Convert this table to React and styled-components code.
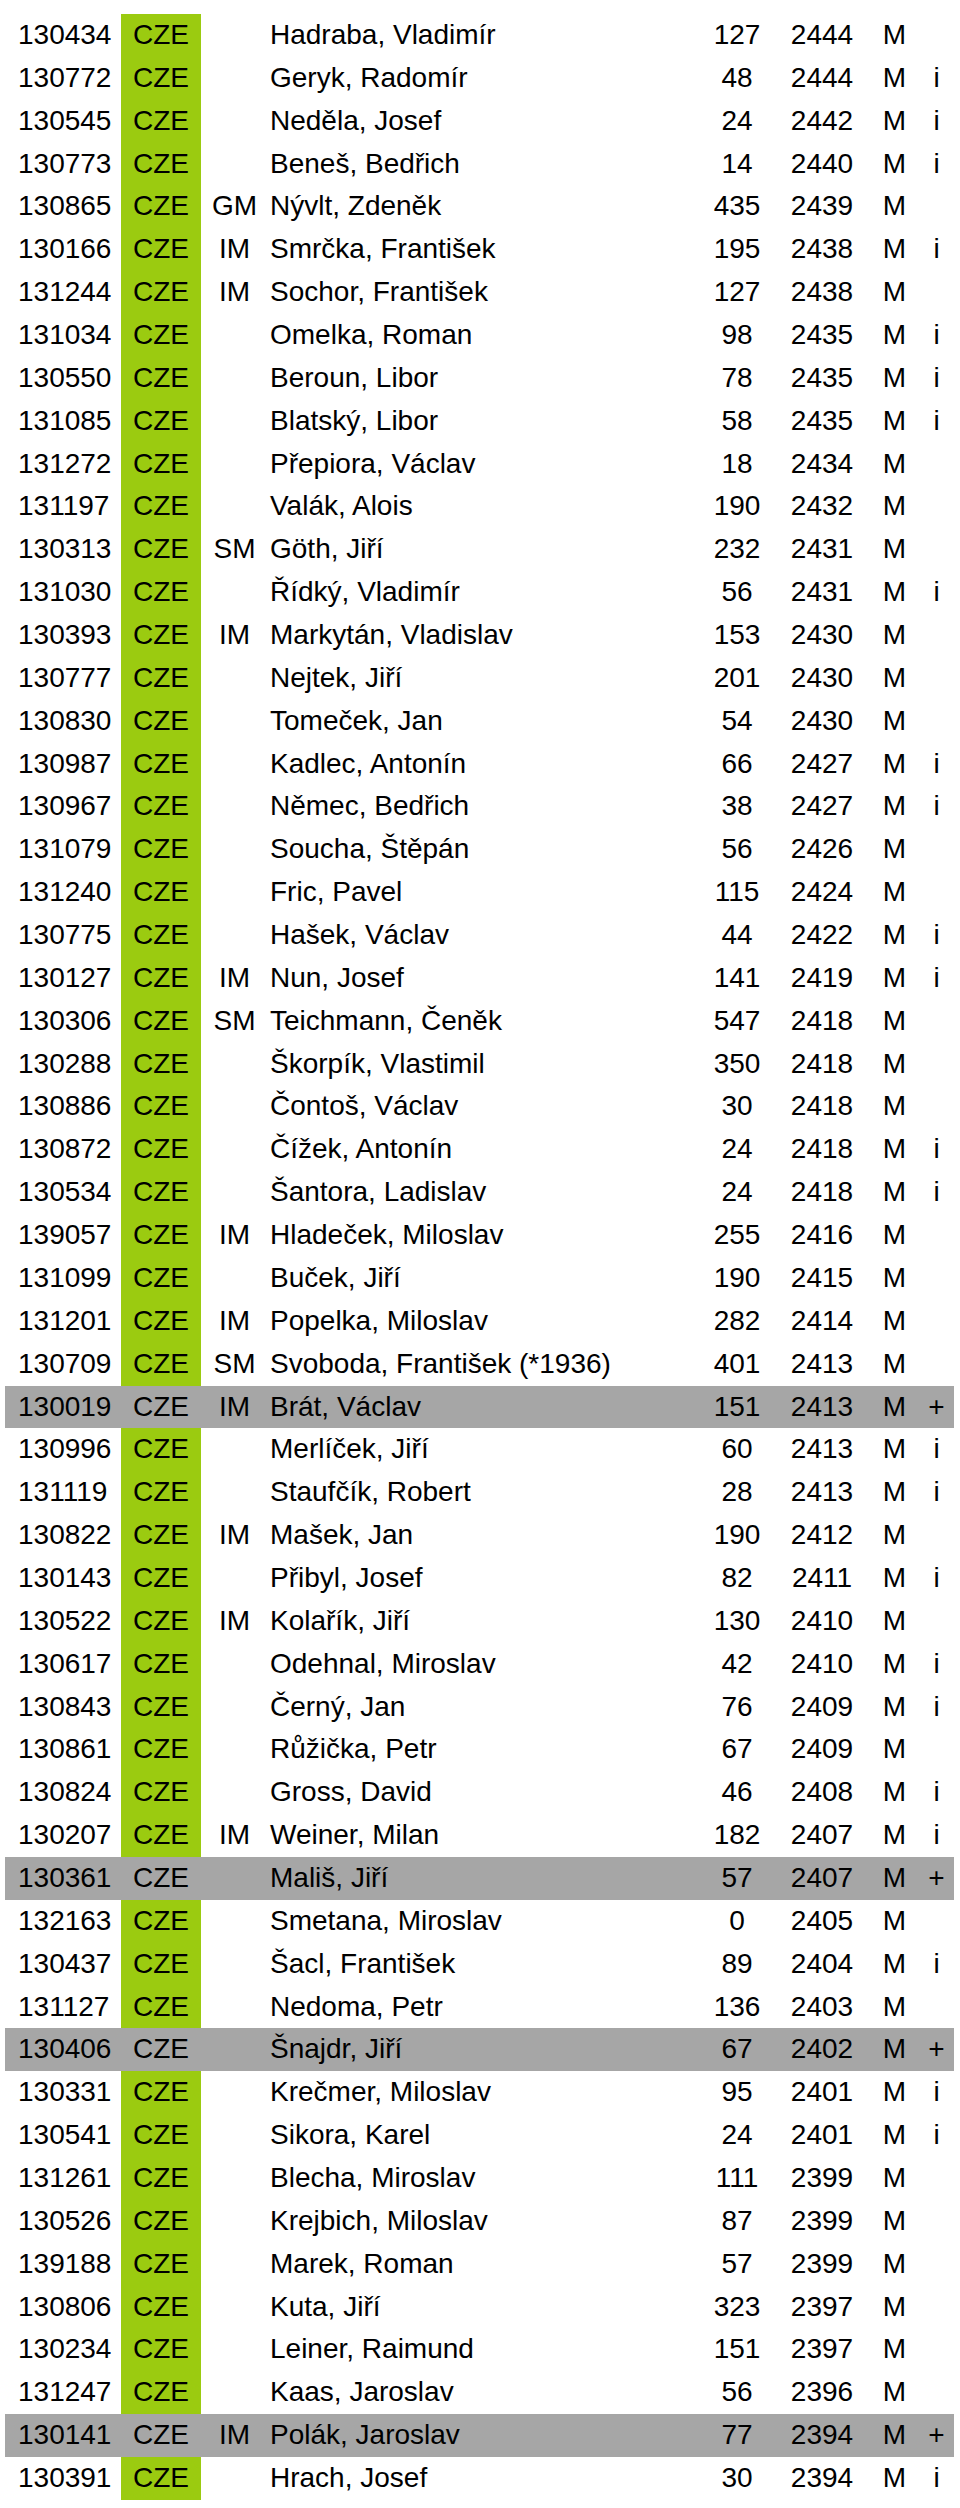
import React from "react";
import styled, { createGlobalStyle } from "styled-components";

const GlobalStyle = createGlobalStyle`
  html, body { margin: 0; padding: 0; background: #ffffff; }
  body { font-family: "Liberation Sans", Arial, sans-serif; color: #000; }
`;

const data = [
  ["130434", "", "Hadraba, Vladimír", "127", "2444", "M", ""],
  ["130772", "", "Geryk, Radomír", "48", "2444", "M", "i"],
  ["130545", "", "Neděla, Josef", "24", "2442", "M", "i"],
  ["130773", "", "Beneš, Bedřich", "14", "2440", "M", "i"],
  ["130865", "GM", "Nývlt, Zdeněk", "435", "2439", "M", ""],
  ["130166", "IM", "Smrčka, František", "195", "2438", "M", "i"],
  ["131244", "IM", "Sochor, František", "127", "2438", "M", ""],
  ["131034", "", "Omelka, Roman", "98", "2435", "M", "i"],
  ["130550", "", "Beroun, Libor", "78", "2435", "M", "i"],
  ["131085", "", "Blatský, Libor", "58", "2435", "M", "i"],
  ["131272", "", "Přepiora, Václav", "18", "2434", "M", ""],
  ["131197", "", "Valák, Alois", "190", "2432", "M", ""],
  ["130313", "SM", "Göth, Jiří", "232", "2431", "M", ""],
  ["131030", "", "Řídký, Vladimír", "56", "2431", "M", "i"],
  ["130393", "IM", "Markytán, Vladislav", "153", "2430", "M", ""],
  ["130777", "", "Nejtek, Jiří", "201", "2430", "M", ""],
  ["130830", "", "Tomeček, Jan", "54", "2430", "M", ""],
  ["130987", "", "Kadlec, Antonín", "66", "2427", "M", "i"],
  ["130967", "", "Němec, Bedřich", "38", "2427", "M", "i"],
  ["131079", "", "Soucha, Štěpán", "56", "2426", "M", ""],
  ["131240", "", "Fric, Pavel", "115", "2424", "M", ""],
  ["130775", "", "Hašek, Václav", "44", "2422", "M", "i"],
  ["130127", "IM", "Nun, Josef", "141", "2419", "M", "i"],
  ["130306", "SM", "Teichmann, Čeněk", "547", "2418", "M", ""],
  ["130288", "", "Škorpík, Vlastimil", "350", "2418", "M", ""],
  ["130886", "", "Čontoš, Václav", "30", "2418", "M", ""],
  ["130872", "", "Čížek, Antonín", "24", "2418", "M", "i"],
  ["130534", "", "Šantora, Ladislav", "24", "2418", "M", "i"],
  ["139057", "IM", "Hladeček, Miloslav", "255", "2416", "M", ""],
  ["131099", "", "Buček, Jiří", "190", "2415", "M", ""],
  ["131201", "IM", "Popelka, Miloslav", "282", "2414", "M", ""],
  ["130709", "SM", "Svoboda, František (*1936)", "401", "2413", "M", ""],
  ["130019", "IM", "Brát, Václav", "151", "2413", "M", "+"],
  ["130996", "", "Merlíček, Jiří", "60", "2413", "M", "i"],
  ["131119", "", "Staufčík, Robert", "28", "2413", "M", "i"],
  ["130822", "IM", "Mašek, Jan", "190", "2412", "M", ""],
  ["130143", "", "Přibyl, Josef", "82", "2411", "M", "i"],
  ["130522", "IM", "Kolařík, Jiří", "130", "2410", "M", ""],
  ["130617", "", "Odehnal, Miroslav", "42", "2410", "M", "i"],
  ["130843", "", "Černý, Jan", "76", "2409", "M", "i"],
  ["130861", "", "Růžička, Petr", "67", "2409", "M", ""],
  ["130824", "", "Gross, David", "46", "2408", "M", "i"],
  ["130207", "IM", "Weiner, Milan", "182", "2407", "M", "i"],
  ["130361", "", "Mališ, Jiří", "57", "2407", "M", "+"],
  ["132163", "", "Smetana, Miroslav", "0", "2405", "M", ""],
  ["130437", "", "Šacl, František", "89", "2404", "M", "i"],
  ["131127", "", "Nedoma, Petr", "136", "2403", "M", ""],
  ["130406", "", "Šnajdr, Jiří", "67", "2402", "M", "+"],
  ["130331", "", "Krečmer, Miloslav", "95", "2401", "M", "i"],
  ["130541", "", "Sikora, Karel", "24", "2401", "M", "i"],
  ["131261", "", "Blecha, Miroslav", "111", "2399", "M", ""],
  ["130526", "", "Krejbich, Miloslav", "87", "2399", "M", ""],
  ["139188", "", "Marek, Roman", "57", "2399", "M", ""],
  ["130806", "", "Kuta, Jiří", "323", "2397", "M", ""],
  ["130234", "", "Leiner, Raimund", "151", "2397", "M", ""],
  ["131247", "", "Kaas, Jaroslav", "56", "2396", "M", ""],
  ["130141", "IM", "Polák, Jaroslav", "77", "2394", "M", "+"],
  ["130391", "", "Hrach, Josef", "30", "2394", "M", "i"],
];

const Table = styled.div`
  display: flex;
  flex-direction: column;
  padding: 14px 6px 0 5px;
  width: 949px;
`;

const Row = styled.div`
  display: grid;
  grid-template-columns: 116px 80px 67px 432px 74px 96px 49px 35px;
  height: 42.86px;
  line-height: 42.86px;
  font-size: 28px;
  background: ${(p) => (p.$highlight ? "#a6a6a6" : "transparent")};
`;

const Cell = styled.div`
  white-space: nowrap;
  overflow: visible;
  text-align: ${(p) => p.$align || "left"};
  padding-left: ${(p) => p.$pl || 0}px;
`;

const Country = styled(Cell)`
  text-align: center;
  background: ${(p) => (p.$highlight ? "transparent" : "#9bcb10")};
`;

export default function App() {
  return (
    <>
      <GlobalStyle />
      <Table>
        {data.map(([id, title, name, games, rating, sex, flag]) => {
          const hl = flag === "+";
          return (
            <Row key={id} $highlight={hl}>
              <Cell $pl={13}>{id}</Cell>
              <Country $highlight={hl}>CZE</Country>
              <Cell $align="center">{title}</Cell>
              <Cell $pl={2}>{name}</Cell>
              <Cell $align="center">{games}</Cell>
              <Cell $align="center">{rating}</Cell>
              <Cell $align="center">{sex}</Cell>
              <Cell $align="center">{flag}</Cell>
            </Row>
          );
        })}
      </Table>
    </>
  );
}
